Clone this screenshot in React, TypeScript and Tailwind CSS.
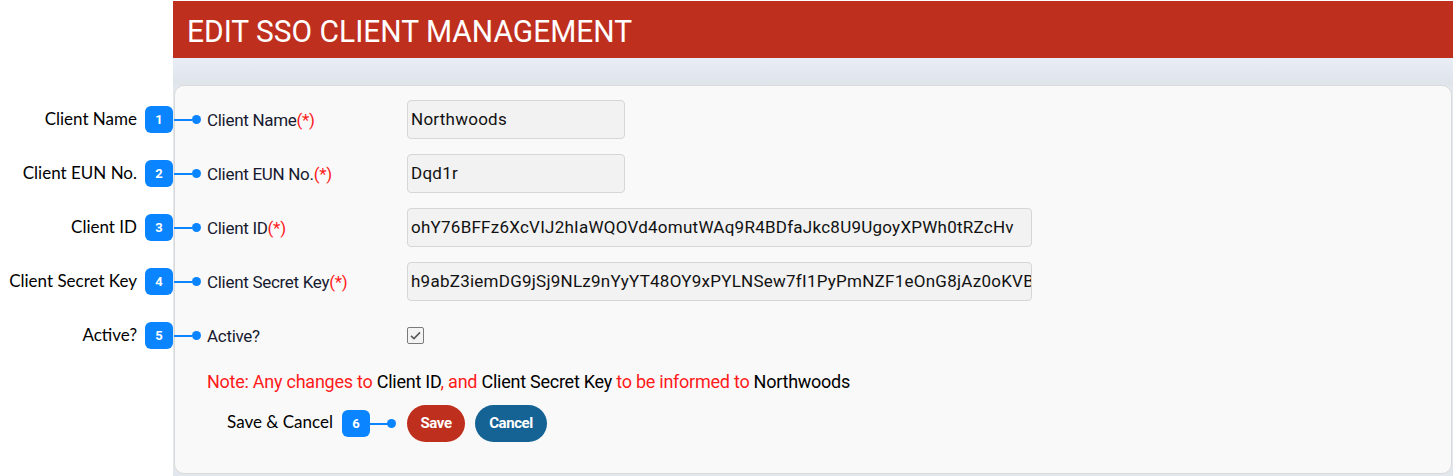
import React from "react";

const rows = [
  { n: "1", ann: "Client Name", label: "Client Name", req: true, value: "Northwoods", wide: false },
  { n: "2", ann: "Client EUN No.", label: "Client EUN No.", req: true, value: "Dqd1r", wide: false },
  { n: "3", ann: "Client ID", label: "Client ID", req: true, value: "ohY76BFFz6XcVIJ2hIaWQOVd4omutWAq9R4BDfaJkc8U9UgoyXPWh0tRZcHv", wide: true },
  { n: "4", ann: "Client Secret Key", label: "Client Secret Key", req: true, value: "h9abZ3iemDG9jSj9NLz9nYyYT48OY9xPYLNSew7fI1PyPmNZF1eOnG8jAz0oKVBq2xTmW9pLr4QzK7vN2sDf", wide: true },
  { n: "5", ann: "Active?", label: "Active?", req: false, value: null, wide: false },
];

function Badge({ n }: { n: string }) {
  return (
    <div className="w-[28px] h-[27px] rounded-[6px] bg-[#0a84ff] text-white flex items-center justify-center text-[13px] font-bold font-['Roboto',sans-serif] shrink-0">
      {n}
    </div>
  );
}

export default function App() {
  return (
    <div className="flex w-[1453px] h-[476px] bg-white overflow-hidden">
      {/* annotation column */}
      <div className="w-[173px] shrink-0 pt-[100px] flex flex-col gap-[15px] font-['Lato',sans-serif] text-[17px] text-black">
        {rows.map((r) => (
          <div key={r.n} className="h-[39px] flex items-center justify-end gap-[8px]">
            <span className="-mt-[2px]">{r.ann}</span>
            <Badge n={r.n} />
          </div>
        ))}
      </div>

      {/* main column */}
      <div className="flex-1 flex flex-col mt-px bg-[#e2e6ed]">
        <div className="h-[57px] bg-[#bf2f1e] flex items-center pl-[14px] pt-[2px] overflow-hidden">
          <h1 className="font-['Roboto',sans-serif] text-[32px] text-white leading-none whitespace-nowrap origin-left scale-x-[0.935]">
            EDIT SSO CLIENT MANAGEMENT
          </h1>
        </div>
        <div className="h-[27px] bg-gradient-to-b from-[#e9eef6] to-[#dfe3ea]" />
        <div className="mx-px h-[389px] rounded-[10px] border border-[#dadada] bg-[#f9f9f9] pt-[14px] font-['Roboto',sans-serif]">
          <div className="flex flex-col gap-[15px]">
            {rows.map((r) => (
              <div key={r.n} className="h-[39px] flex items-center">
                <div className="w-[18px] h-[2px] bg-[#0a84ff] -ml-px" />
                <div className="w-[9px] h-[9px] rounded-full bg-[#0a84ff]" />
                <div className="w-[206px] pl-[6px] pt-[2px] text-[17px] text-[#171a30] tracking-[-0.3px] shrink-0">
                  {r.label}
                  {r.req && <span className="text-[#ff1a1a]">(*)</span>}
                </div>
                {r.value !== null ? (
                  <div
                    className={
                      (r.wide ? "w-[625px]" : "w-[218px]") +
                      " h-[39px] rounded-[4px] border border-[#d6d6d6] bg-[#f2f2f2] flex items-center pl-[3px] pt-px overflow-hidden whitespace-nowrap text-[17px] tracking-[0.25px] text-[#111]"
                    }
                  >
                    {r.value}
                  </div>
                ) : (
                  <div className="w-[17px] h-[17px] border border-[#7a7a7a] bg-[#f4f4f4] rounded-[2px] flex items-center justify-center">
                    <svg width="13" height="13" viewBox="0 0 13 13">
                      <path d="M2 6.8 L5 9.6 L11 3.4" fill="none" stroke="#5a5a5a" strokeWidth="1.6" />
                    </svg>
                  </div>
                )}
              </div>
            ))}
          </div>

          <div className="pl-[32px] mt-[17px] text-[18px] tracking-[-0.25px] text-[#ff1a1a] leading-[20px]">
            Note: Any changes to <span className="text-black">Client ID</span>, and{" "}
            <span className="text-black">Client Secret Key</span> to be informed to{" "}
            <span className="text-black">Northwoods</span>
          </div>

          <div className="flex items-center mt-[13px]">
            <div className="w-[232px] flex items-center justify-end pr-[11px]">
              <span className="font-['Lato',sans-serif] text-[17px] text-black mr-[9px] -mt-[3px]">Save &amp; Cancel</span>
              <Badge n="6" />
              <div className="w-[18px] h-[2px] bg-[#0a84ff]" />
              <div className="w-[9px] h-[9px] rounded-full bg-[#0a84ff] -ml-[1px]" />
            </div>
            <button className="h-[37px] w-[58px] rounded-full bg-[#bf2f1e] text-white text-[15px] font-bold tracking-[-0.4px]">
              Save
            </button>
            <button className="ml-[10px] h-[37px] w-[72px] rounded-full bg-[#156394] text-white text-[15px] font-bold tracking-[-0.4px]">
              Cancel
            </button>
          </div>
        </div>
      </div>
    </div>
  );
}
